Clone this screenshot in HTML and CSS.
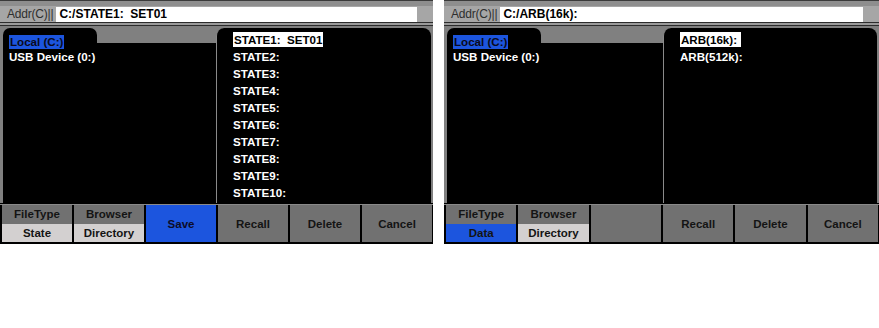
FILE: index.html
```html
<!DOCTYPE html>
<html>
<head>
<meta charset="utf-8">
<link rel="stylesheet" href="styles.css">
</head>
<body>
<div class="row">
  <div class="screen screen-a">
    <div class="topstrip"></div>
    <div class="addr">
      <span class="addr-label">Addr(C)||</span>
      <span class="addr-box">C:/STATE1:&nbsp; SET01</span>
    </div>
    <div class="stripes"></div>
    <div class="main">
      <div class="left">
        <div class="tab"><span class="sel-blue">Local (C:)</span></div>
        <div class="left-body"><div class="item">USB Device (0:)</div></div>
      </div>
      <div class="right">
        <div class="item"><span class="sel-white">STATE1:&nbsp; SET01</span></div>
        <div class="item">STATE2:</div>
        <div class="item">STATE3:</div>
        <div class="item">STATE4:</div>
        <div class="item">STATE5:</div>
        <div class="item">STATE6:</div>
        <div class="item">STATE7:</div>
        <div class="item">STATE8:</div>
        <div class="item">STATE9:</div>
        <div class="item">STATE10:</div>
      </div>
    </div>
    <div class="buttons">
      <div class="btn split"><div class="head">FileType</div><div class="val">State</div></div>
      <div class="btn split"><div class="head">Browser</div><div class="val">Directory</div></div>
      <div class="btn blue">Save</div>
      <div class="btn">Recall</div>
      <div class="btn">Delete</div>
      <div class="btn">Cancel</div>
    </div>
  </div>
  <div class="screen screen-b">
    <div class="topstrip"></div>
    <div class="addr">
      <span class="addr-label">Addr(C)||</span>
      <span class="addr-box">C:/ARB(16k):</span>
    </div>
    <div class="stripes"></div>
    <div class="main">
      <div class="left">
        <div class="tab"><span class="sel-blue">Local (C:)</span></div>
        <div class="left-body"><div class="item">USB Device (0:)</div></div>
      </div>
      <div class="right">
        <div class="item"><span class="sel-white">ARB(16k):&nbsp;</span></div>
        <div class="item">ARB(512k):</div>
      </div>
    </div>
    <div class="buttons">
      <div class="btn split"><div class="head">FileType</div><div class="val blueval">Data</div></div>
      <div class="btn split"><div class="head">Browser</div><div class="val">Directory</div></div>
      <div class="btn"></div>
      <div class="btn">Recall</div>
      <div class="btn">Delete</div>
      <div class="btn">Cancel</div>
    </div>
  </div>
</div>
</body>
</html>
```
FILE: styles.css
```css
html, body {
  margin: 0;
  padding: 0;
  background: #ffffff;
}
body {
  font-family: "Liberation Sans", Arial, sans-serif;
  width: 879px;
  height: 328px;
  overflow: hidden;
}
.row {
  display: flex;
  gap: 11px;
}
.screen {
  height: 244px;
  background: #000;
  display: flex;
  flex-direction: column;
}
.screen-a { width: 433px; }
.screen-b { width: 435px; }

.topstrip {
  height: 5px;
  border-top: 1px solid #3a3a3a;
  background: #8e8e8e;
}
.addr {
  height: 16px;
  background: #a6a6a6;
  display: flex;
  align-items: center;
  padding-right: 16px;
}
.addr-label {
  font-size: 12px;
  color: #2e2e2e;
  padding-left: 7px;
  padding-right: 3px;
  letter-spacing: -0.2px;
}
.addr-box {
  flex: 1;
  height: 15px;
  background: #fff;
  color: #000;
  font-weight: bold;
  font-size: 12px;
  line-height: 15px;
  padding-left: 3px;
}
.stripes {
  height: 5px;
  background: linear-gradient(#2c2c2c 0 1px, #9a9a9a 1px 3px, #2c2c2c 3px 4px, #7e7e7e 4px 5px);
}
.main {
  flex: 1;
  display: flex;
  background: #808080;
  padding-left: 3px;
  padding-right: 2px;
}
.left {
  width: 213px;
  display: flex;
  flex-direction: column;
}
.screen-b .left { width: 216px; }
.tab {
  width: 94px;
  height: 15px;
  background: #000;
  border-radius: 7px 7px 0 0;
  padding: 4px 0 0 6px;
  box-sizing: border-box;
  margin-top: 1px;
  overflow: visible;
  position: relative;
  z-index: 1;
}
.left-body {
  flex: 1;
  background: #000;
  padding: 6px 0 0 6px;
}
.item {
  color: #fff;
  font-weight: bold;
  font-size: 11.6px;
  height: 17px;
  line-height: 15px;
  white-space: nowrap;
}
.tab .sel-blue {
  display: inline-block;
  background: #1c55de;
  color: #0a0a20;
  font-weight: bold;
  font-size: 11.6px;
  line-height: 14px;
  padding: 0 1px;
}
.right {
  flex: 1;
  background: #000;
  border-left: 1px solid #8a8a8a;
  border-radius: 8px 8px 0 0;
  margin-top: 1px;
  padding: 4px 0 0 16px;
}
.sel-white {
  background: #fff;
  color: #000;
  display: inline-block;
  padding: 0 1px;
}
.buttons {
  height: 37px;
  margin-top: 1px;
  border-top: 1px solid #8a8a8a;
  display: flex;
  gap: 2px;
  padding: 0 1px 2px 2px;
  background: #000;
}
.btn {
  flex: 1;
  background: #717171;
  color: #141414;
  font-weight: bold;
  font-size: 11.5px;
  display: flex;
  align-items: center;
  justify-content: center;
}
.btn.blue {
  background: #1c55de;
  color: #0c0c28;
}
.btn.split {
  flex-direction: column;
  align-items: stretch;
}
.btn.split .head, .btn.split .val {
  flex: 1;
  display: flex;
  align-items: center;
  justify-content: center;
}
.btn.split .val {
  background: #d3d0d0;
}
.btn.split .val.blueval {
  background: #1c55de;
}
```
